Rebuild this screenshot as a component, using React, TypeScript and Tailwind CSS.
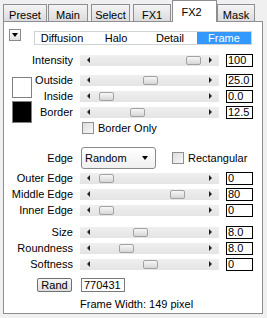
import React from "react";

const FONT = "font-['Liberation_Sans',Arial,sans-serif]";

function Tab({ label, active, className }: { label: string; active?: boolean; className: string }) {
  if (active) {
    return (
      <div
        className={`relative z-10 -mb-px flex h-[22px] items-start justify-center border border-b-0 border-[#8c8e94] bg-white pt-[3px] ${className}`}
      >
        {label}
      </div>
    );
  }
  return (
    <div
      className={`flex h-[17px] items-start justify-center border border-b-0 border-[#8c8e94] bg-gradient-to-b from-[#f4f4f4] to-[#dcdcdc] pt-[2px] ${className}`}
    >
      {label}
    </div>
  );
}

function Arrow({ dir }: { dir: "left" | "right" }) {
  return dir === "left" ? (
    <span className="h-0 w-0 border-y-[3px] border-r-[3px] border-y-transparent border-r-[#222]" />
  ) : (
    <span className="h-0 w-0 border-y-[3px] border-l-[3px] border-y-transparent border-l-[#222]" />
  );
}

function Track({ pos }: { pos: number }) {
  return (
    <div className="relative flex h-[11px] w-[139px] items-center justify-between bg-gradient-to-b from-[#efefef] to-[#e4e4e4] px-[7px]">
      <Arrow dir="left" />
      <Arrow dir="right" />
      <div
        className="absolute top-px h-[9px] w-[15px] rounded-[2px] border border-[#a2a2a2] bg-gradient-to-b from-[#f7f7f7] to-[#d6d6d6]"
        style={{ left: pos }}
      />
    </div>
  );
}

function ValueBox({ value }: { value: string }) {
  return (
    <div className="ml-[7px] h-[13px] w-[27px] border border-black bg-white pl-[1px] leading-[11px]">{value}</div>
  );
}

function SliderRow({
  label,
  pos,
  value,
  labelClass = "w-[69px]",
}: {
  label: string;
  pos: number;
  value: string;
  labelClass?: string;
}) {
  return (
    <div className="flex h-[16px] items-center">
      <span className={`${labelClass} text-right`}>{label}</span>
      <div className="ml-[7px]">
        <Track pos={pos} />
      </div>
      <ValueBox value={value} />
    </div>
  );
}

function Checkbox() {
  return <div className="h-[12px] w-[12px] border border-[#8f8f8f] bg-gradient-to-br from-[#dcdcdc] to-[#f8f8f8]" />;
}

export default function App() {
  return (
    <div className={`h-[318px] w-[267px] bg-[#f0f0f0] pl-[3px] text-[11px] text-black ${FONT}`}>
      <div className="flex h-[21px] items-end">
        <Tab label="Preset" className="w-[44px]" />
        <Tab label="Main" className="ml-px w-[40px]" />
        <Tab label="Select" className="ml-[3px] w-[39px]" />
        <Tab label="FX1" className="ml-[3px] w-[38px]" />
        <Tab label="FX2" active className="ml-px w-[45px] pr-[6px]" />
        <Tab label="Mask" className="w-[38px]" />
      </div>

      <div className="flex h-[293px] w-[260px] flex-col border border-[#8c8e94] bg-white">
        {/* mode row */}
        <div className="mt-[7px] flex h-[16px] items-start">
          <div className="ml-[5px] flex h-[12px] w-[12px] items-center justify-center border border-[#8a8a8a] bg-gradient-to-b from-[#fdfdfd] to-[#e2e2e2]">
            <span className="h-0 w-0 border-x-[3px] border-t-[4px] border-x-transparent border-t-black" />
          </div>
          <div className="ml-[13px] mt-[2px] flex h-[14px] w-[218px] border border-[#cfd3d8] bg-white leading-[12px]">
            <span className="w-[54px] text-center">Diffusion</span>
            <span className="w-[54px] text-center">Halo</span>
            <span className="w-[54px] text-center">Detail</span>
            <span className="w-[54px] bg-[#3399ff] text-center text-white">Frame</span>
          </div>
        </div>

        <div className="mt-[7px]">
          <SliderRow label="Intensity" pos={106} value="100" />
        </div>

        <div className="mt-[4px] flex">
          <div className="ml-[8px] flex w-[20px] flex-col">
            <div className="mt-[5px] h-[21px] w-[20px] border border-[#808080] bg-white" />
            <div className="mt-[3px] h-[22px] w-[20px] border border-[#808080] bg-black" />
          </div>
          <div className="flex flex-col">
            <SliderRow label="Outside" pos={63} value="25.0" labelClass="w-[41px]" />
            <SliderRow label="Inside" pos={19} value="0.0" labelClass="w-[41px]" />
            <SliderRow label="Border" pos={50} value="12.5" labelClass="w-[41px]" />
            <div className="flex h-[16px] items-center">
              <div className="ml-[50px]">
                <Checkbox />
              </div>
              <span className="ml-[4px]">Border Only</span>
            </div>
          </div>
        </div>

        <div className="mt-[11px] flex h-[22px] items-center">
          <span className="w-[69px] text-right">Edge</span>
          <div className="ml-[8px] flex h-[22px] w-[75px] items-center justify-between rounded-[3px] border border-[#8a8a8a] bg-gradient-to-b from-[#ffffff] to-[#f0f0f0] pl-[3px] pr-[7px]">
            <span>Random</span>
            <span className="h-0 w-0 border-x-[3px] border-t-[4px] border-x-transparent border-t-black" />
          </div>
          <div className="ml-[16px]">
            <Checkbox />
          </div>
          <span className="ml-[4px]">Rectangular</span>
        </div>

        <div className="mt-[1px] flex flex-col">
          <SliderRow label="Outer Edge" pos={19} value="0" />
          <SliderRow label="Middle Edge" pos={90} value="80" />
          <SliderRow label="Inner Edge" pos={19} value="0" />
        </div>

        <div className="mt-[6px] flex flex-col">
          <SliderRow label="Size" pos={53} value="8.0" />
          <SliderRow label="Roundness" pos={39} value="8.0" />
          <SliderRow label="Softness" pos={63} value="0" />
        </div>

        <div className="mt-[6px] flex h-[14px] items-center">
          <div className="ml-[33px] flex h-[14px] w-[35px] items-center justify-center rounded-[2px] border border-[#707070] bg-gradient-to-b from-[#f6f6f6] to-[#dddddd]">
            Rand
          </div>
          <div className="ml-[9px] h-[14px] w-[44px] border border-[#7a7a7a] bg-white pl-[2px] leading-[12px]">770431</div>
        </div>

        <div className="mt-[5px] h-[14px] pl-[76px] leading-[14px]">Frame Width: 149 pixel</div>
      </div>
    </div>
  );
}
